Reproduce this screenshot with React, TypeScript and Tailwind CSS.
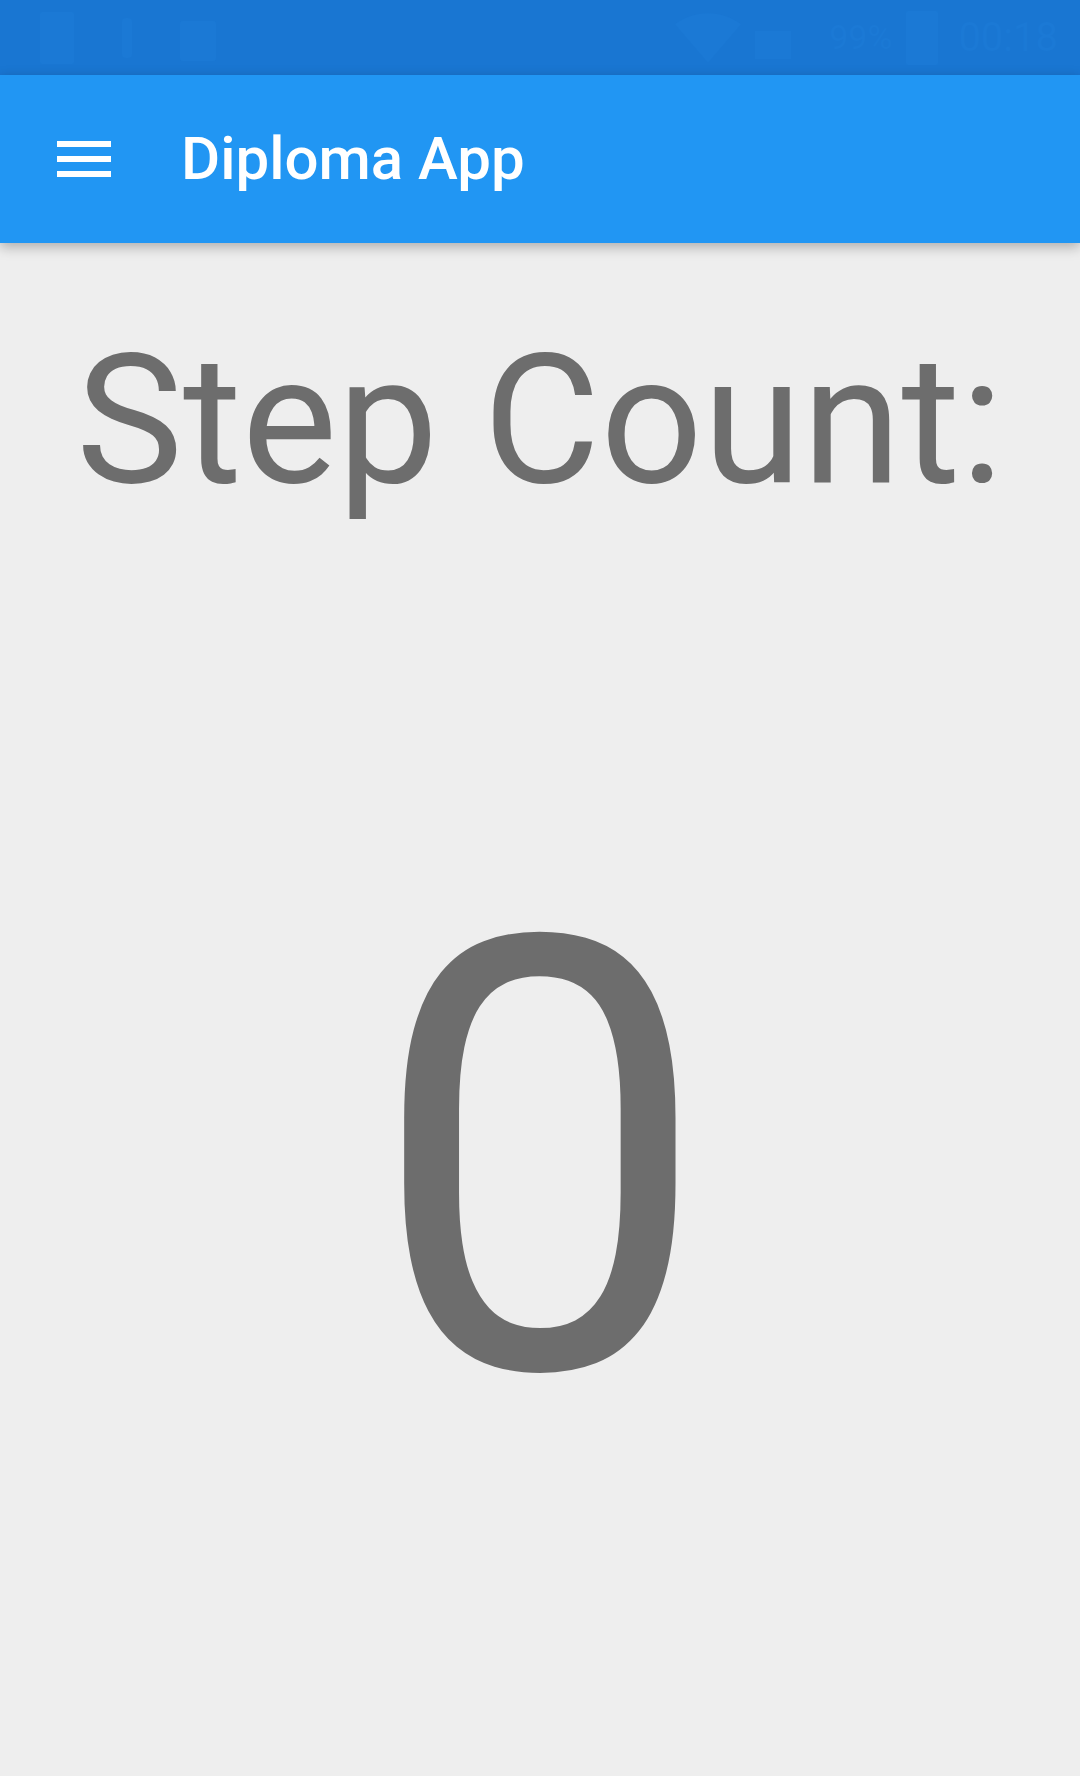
import React from "react";

const ghost = "text-[#1b79d5]";

function StatusBar() {
  return (
    <div className="flex h-[75px] items-center justify-between bg-[#1976d2] pl-[40px] pr-[22px]">
      <div className={`flex items-center gap-[40px] ${ghost}`}>
        <svg width="34" height="52" viewBox="0 0 34 52" fill="currentColor">
          <rect x="0" y="0" width="34" height="52" rx="2" />
        </svg>
        <svg width="26" height="40" viewBox="0 0 26 40" fill="currentColor">
          <rect x="8" y="0" width="10" height="40" rx="4" />
        </svg>
        <svg width="36" height="46" viewBox="0 0 36 46" fill="currentColor">
          <rect x="0" y="6" width="36" height="40" rx="3" />
        </svg>
      </div>
      <div className={`flex items-center gap-[14px] ${ghost} font-['Roboto',sans-serif] text-[34px]`}>
        <svg width="66" height="50" viewBox="0 0 24 18" fill="currentColor">
          <path d="M12 18 0 4C3.3 1.5 7.5 0 12 0s8.7 1.5 12 4z" />
        </svg>
        <svg width="36" height="42" viewBox="0 0 36 42" fill="currentColor">
          <rect x="0" y="14" width="36" height="28" />
        </svg>
        <span className="ml-[24px]">99%</span>
        <svg width="32" height="54" viewBox="0 0 32 54" fill="currentColor">
          <rect x="0" y="0" width="32" height="54" rx="2" />
        </svg>
        <span className="ml-[6px] text-[40px]">00:18</span>
      </div>
    </div>
  );
}

function AppBar() {
  return (
    <header className="relative z-10 flex h-[168px] items-center bg-[#2196f3] shadow-[0_4px_12px_rgba(0,0,0,0.28)]">
      <button className="ml-[48px] flex h-[72px] w-[72px] items-center justify-center">
        <svg width="72" height="72" viewBox="0 0 24 24" fill="white">
          <path d="M3 18h18v-2H3v2zm0-5h18v-2H3v2zm0-7v2h18V6H3z" />
        </svg>
      </button>
      <h1 className="ml-[61px] font-['Roboto',sans-serif] text-[60px] font-medium leading-none text-white">
        Diploma App
      </h1>
    </header>
  );
}

export default function App() {
  return (
    <div className="flex h-[1776px] w-[1080px] flex-col bg-[#eeeeee] font-['Roboto',sans-serif]">
      <StatusBar />
      <AppBar />
      <main className="flex flex-col items-center">
        <p className="mt-[70px] text-[180px] leading-[1.2] text-[#6d6d6d]">Step Count:</p>
        <p className="mt-[330px] text-[604px] leading-none text-[#6d6d6d]">0</p>
      </main>
    </div>
  );
}
